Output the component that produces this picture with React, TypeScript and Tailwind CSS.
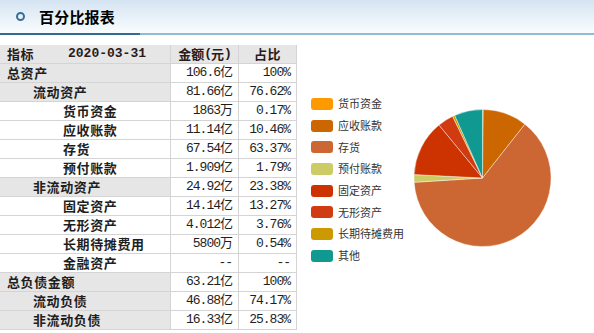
import React from "react";

type Row = { label: string; level: 0 | 1 | 2; amount: string; pct: string };

const rows: Row[] = [
  { label: "总资产", level: 0, amount: "106.6亿", pct: "100%" },
  { label: "流动资产", level: 1, amount: "81.66亿", pct: "76.62%" },
  { label: "货币资金", level: 2, amount: "1863万", pct: "0.17%" },
  { label: "应收账款", level: 2, amount: "11.14亿", pct: "10.46%" },
  { label: "存货", level: 2, amount: "67.54亿", pct: "63.37%" },
  { label: "预付账款", level: 2, amount: "1.909亿", pct: "1.79%" },
  { label: "非流动资产", level: 1, amount: "24.92亿", pct: "23.38%" },
  { label: "固定资产", level: 2, amount: "14.14亿", pct: "13.27%" },
  { label: "无形资产", level: 2, amount: "4.012亿", pct: "3.76%" },
  { label: "长期待摊费用", level: 2, amount: "5800万", pct: "0.54%" },
  { label: "金融资产", level: 2, amount: "--", pct: "--" },
  { label: "总负债金额", level: 0, amount: "63.21亿", pct: "100%" },
  { label: "流动负债", level: 1, amount: "46.88亿", pct: "74.17%" },
  { label: "非流动负债", level: 1, amount: "16.33亿", pct: "25.83%" },
];

const slices = [
  { name: "货币资金", value: 0.17, color: "#ff9900" },
  { name: "应收账款", value: 10.46, color: "#cc6600" },
  { name: "存货", value: 63.37, color: "#cc6633" },
  { name: "预付账款", value: 1.79, color: "#cccc66" },
  { name: "固定资产", value: 13.27, color: "#cc3300" },
  { name: "无形资产", value: 3.76, color: "#d13b12" },
  { name: "长期待摊费用", value: 0.54, color: "#cc9900" },
  { name: "其他", value: 6.64, color: "#109990" },
];

const cjk = { fontFamily: '"Noto Sans CJK SC", "Noto Sans", sans-serif' };
const mono = { fontFamily: '"Liberation Mono", "Noto Sans CJK SC", monospace' };

function Pie() {
  const cx = 70.5;
  const cy = 70;
  const r = 68.5;
  const total = slices.reduce((s, x) => s + x.value, 0);
  let acc = 0;
  return (
    <svg width="141" height="141" viewBox="0 0 141 141">
      {slices.map((s) => {
        const a0 = (acc / total) * Math.PI * 2 - Math.PI / 2;
        acc += s.value;
        const a1 = (acc / total) * Math.PI * 2 - Math.PI / 2;
        const x0 = cx + r * Math.cos(a0);
        const y0 = cy + r * Math.sin(a0);
        const x1 = cx + r * Math.cos(a1);
        const y1 = cy + r * Math.sin(a1);
        const large = a1 - a0 > Math.PI ? 1 : 0;
        const d = `M ${cx} ${cy} L ${x0} ${y0} A ${r} ${r} 0 ${large} 1 ${x1} ${y1} Z`;
        return (
          <path
            key={s.name}
            d={d}
            fill={s.color}
            stroke="#ffffff"
            strokeWidth="0.6"
            strokeOpacity="0.7"
          />
        );
      })}
    </svg>
  );
}

export default function App() {
  const indent = ["pl-[7px]", "pl-[33px]", "pl-[63px]"];
  return (
    <div className="w-[594px] h-[333px] bg-white overflow-hidden" style={cjk}>
      {/* title bar */}
      <div className="h-[33px] bg-gradient-to-b from-[#d5e4f2] to-[#fafcfe] flex items-center">
        <div className="ml-[16px] w-[9px] h-[9px] rounded-full border-2 border-[#3a6e96]" />
        <div className="ml-[14px] text-[15px] font-bold text-black leading-none tracking-[0.2px]">
          百分比报表
        </div>
      </div>
      <div className="flex h-[2px]">
        <div className="w-[140px] bg-[#2f6b93]" />
        <div className="flex-1 bg-[#8dbdd5]" />
      </div>

      <div className="flex mt-[10px]">
        {/* table */}
        <div className="flex flex-col w-[297px]">
          <div className="flex h-[19px] border-b border-[#d4d4d4] bg-[#e6e6e6] text-[13px] font-bold text-[#2a1a1a]">
            <div className="w-[171px] border-r border-[#d4d4d4] flex items-center">
              <span className="pl-[7px] tracking-[0.5px]">指标</span>
              <span className="ml-[34px] font-bold" style={mono}>
                2020-03-31
              </span>
            </div>
            <div className="w-[68px] border-r border-[#d4d4d4] flex items-center justify-center">
              <span>金额</span>
              <span style={mono} className="tracking-[-1px]">(</span>
              <span>元</span>
              <span style={mono} className="tracking-[-1px]">)</span>
            </div>
            <div className="w-[58px] border-r border-[#d4d4d4] flex items-center justify-center tracking-[0.5px]">
              占比
            </div>
          </div>
          {rows.map((r) => (
            <div key={r.label} className="flex h-[19px] border-b border-[#d4d4d4] text-[13px] text-[#1e1e1e]">
              <div
                className={`w-[171px] border-r border-[#d4d4d4] flex items-center font-bold tracking-[0.6px] ${indent[r.level]} ${
                  r.level < 2 ? "bg-[#e6e6e6]" : "bg-white"
                }`}
              >
                {r.label}
              </div>
              <div
                className="w-[68px] border-r border-[#d4d4d4] flex items-center justify-end pr-[6px] tracking-[-1px]"
                style={mono}
              >
                {r.amount}
              </div>
              <div
                className="w-[58px] border-r border-[#d4d4d4] flex items-center justify-end pr-[6px] tracking-[-1px]"
                style={mono}
              >
                {r.pct}
              </div>
            </div>
          ))}
        </div>

        {/* legend */}
        <div className="ml-[14px] mt-[48px] flex flex-col w-[101px]">
          {slices.map((s) => (
            <div key={s.name} className="flex items-center h-[21.7px]">
              <div className="w-[22px] h-[12px] rounded-[3px]" style={{ backgroundColor: s.color }} />
              <span className="ml-[5px] text-[11px] text-[#333] leading-none">{s.name}</span>
            </div>
          ))}
        </div>

        {/* pie */}
        <div className="mt-[63px]">
          <Pie />
        </div>
      </div>
    </div>
  );
}
